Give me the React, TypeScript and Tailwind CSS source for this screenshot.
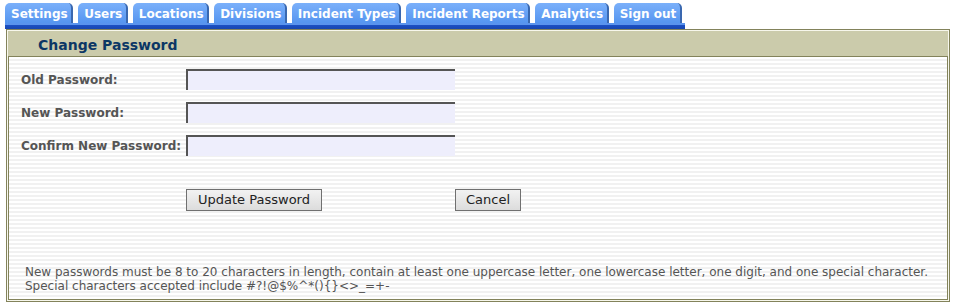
import React from "react";

const tabs = ["Settings", "Users", "Locations", "Divisions", "Incident Types", "Incident Reports", "Analytics", "Sign out"];

function Field({ label }: { label: string }) {
  return (
    <div className="flex items-center h-[21px]">
      <div className="w-[165px] text-[12px] font-bold text-[#555555] leading-[14px] whitespace-nowrap">{label}</div>
      <input
        type="password"
        className="w-[269px] h-[21px] bg-[#eeeefc] border-t-2 border-l-2 border-t-[#555555] border-l-[#555555] outline-none"
      />
    </div>
  );
}

export default function App() {
  return (
    <div className="w-[955px] h-[308px] bg-white overflow-hidden" style={{ fontFamily: '"DejaVu Sans", Verdana, sans-serif' }}>
      <div className="flex pl-[5px] pt-[3px] gap-[5px]">
        {tabs.map((t) => (
          <div
            key={t}
            className="h-[20px] rounded-t-[5px] pl-[6px] pr-[3.5px] bg-[linear-gradient(to_bottom,#7bb0fa,#5595f0)] border-r-2 border-r-[#3a68b0] text-white font-bold text-[12px] leading-[22px] whitespace-nowrap"
          >
            {t}
          </div>
        ))}
      </div>
      <div className="ml-[5px] w-[680px] h-[6px] bg-[linear-gradient(to_bottom,#5a94ee_0,#5a94ee_2px,#1c50c4_2px,#1746b0_100%)]" />
      <div className="ml-[6px] w-[944px] border border-[#83835b] bg-[#f7f7ec] p-[1px]">
        <div className="h-[26px] bg-[#cbcbab] border-b border-[#83835b] pl-[30px] text-[14px] font-bold text-[#0c3765] leading-[29px]">
          Change Password
        </div>
        <div className="h-[243px] border-x border-b border-[#83835b] bg-[repeating-linear-gradient(to_bottom,#ffffff_0,#ffffff_2px,#f1f1f1_2px,#f1f1f1_4px)] pl-[12px] pt-[12px] flex flex-col">
          <div className="flex flex-col gap-[12px]">
            <Field label="Old Password:" />
            <Field label="New Password:" />
            <Field label="Confirm New Password:" />
          </div>
          <div className="flex mt-[33px] pl-[165px]">
            <button className="w-[136px] h-[22px] border border-[#707070] bg-[linear-gradient(to_bottom,#f2f2f2,#dcdcdc)] text-[13px] text-[#222222] leading-[20px]">
              Update Password
            </button>
            <button className="ml-[133px] w-[66px] h-[22px] border border-[#707070] bg-[linear-gradient(to_bottom,#f2f2f2,#dcdcdc)] text-[13px] text-[#222222] leading-[20px]">
              Cancel
            </button>
          </div>
          <div className="mt-[54px] pl-[4px] text-[12px] text-[#555555] leading-[14px] whitespace-nowrap">
            <div>New passwords must be 8 to 20 characters in length, contain at least one uppercase letter, one lowercase letter, one digit, and one special character.</div>
            <div>Special characters accepted include #?!@$%^*(){"{}"}&lt;&gt;_=+-</div>
          </div>
        </div>
      </div>
    </div>
  );
}
